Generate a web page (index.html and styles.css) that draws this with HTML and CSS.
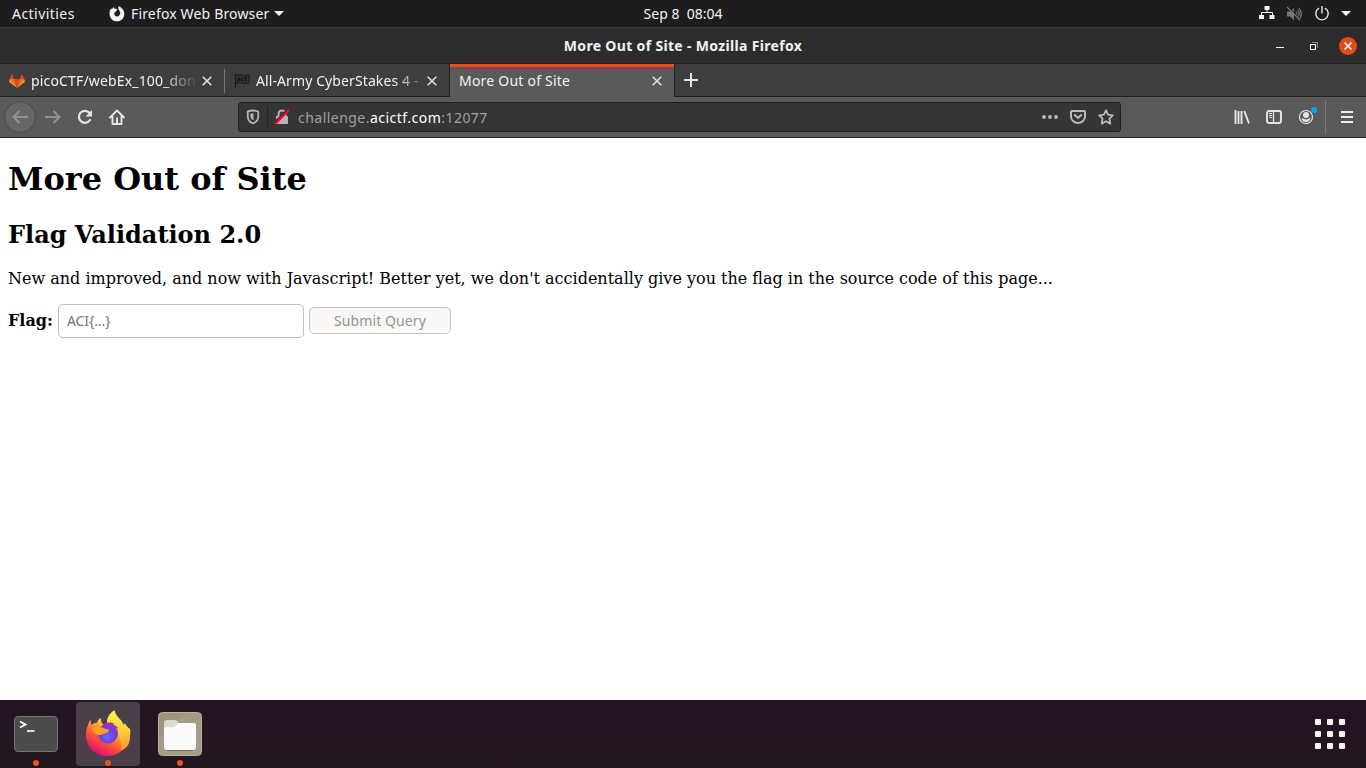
FILE: index.html
```html
<!DOCTYPE html>
<html lang="en">
<head>
<meta charset="utf-8">
<title>More Out of Site</title>
<link rel="stylesheet" href="styles.css">
</head>
<body>
<header class="topbar">
  <div class="top-left">
    <span class="activities">Activities</span>
    <svg class="ffsym" width="16" height="16" viewBox="0 0 16 16"><path d="M5 1.2 5.700 3C6.900 2.500 8 2.800 8.500 3.700L6.700 5.400C6.300 5.900 6.200 6.300 5.500 6.600 4.600 8.800 6.200 10.600 8.200 10.400 11 10.100 12 7.200 10.600 4.900 10 3.800 9 3 9.400.3c1.500.2 2.500 1 3 2.100l.7-.1c3 3.700 2.700 8.100.3 10.700-3 3.200-8.300 3-11-.1C-.2 9.700.1 5.300 2.100 2.300l.8 1.200C3.400 2.200 4 1.600 5 1.200z" fill="#f2f2f2"/></svg>
    <span class="appname">Firefox Web Browser</span>
    <svg class="caret" width="10" height="5" viewBox="0 0 10 5"><path d="M0 0h10L5 5z" fill="#f2f2f2"/></svg>
  </div>
  <div class="clock">Sep 8&nbsp; 08:04</div>
  <div class="top-right">
    <svg width="16" height="14" viewBox="0 0 16 14"><path d="M5.500 0h5v4h-5zM0 9h5v4H0zM10.500 9h5v4h-5z" fill="#f2f2f2"/><path d="M8 4v2.500M2.500 9V6.500h11V9" fill="none" stroke="#f2f2f2"/></svg>
    <svg width="16" height="16" viewBox="0 0 16 16"><path d="M1 5.500h3L8 2v12l-4-3.500H1z" fill="#777"/><path d="M10 5.500q2 2.500 0 5M11.500 3.500q3.500 4.500 0 9M13 1.800q4.500 6 0 12.400" fill="none" stroke="#777" stroke-width="1.200"/><path d="m2 1 12 12" stroke="#1d1d1d" stroke-width="1.500"/><path d="m1 1 13 13" stroke="#777" stroke-width="1.200"/></svg>
    <svg width="16" height="16" viewBox="0 0 16 16"><path d="M5 2.200a6.200 6.200 0 1 0 6 0M8 0v7.500" fill="none" stroke="#eee" stroke-width="1.400"/></svg>
    <svg width="10" height="5" viewBox="0 0 10 5"><path d="M0 0h10L5 5z" fill="#f2f2f2"/></svg>
  </div>
</header>
<div class="titlebar">
  <span class="wintitle">More Out of Site - Mozilla Firefox</span>
  <div class="winbtns">
    <svg width="8" height="1"><path d="M0 0h8v1H0z" fill="#fff"/></svg>
    <svg width="8" height="8" viewBox="0 0 8 8"><path d="M.5 2.500h5v5h-5z" fill="none" stroke="#fff"/><path d="M2 .5h5.500V6" fill="none" stroke="#888"/></svg>
    <svg width="18" height="18" viewBox="0 0 18 18"><circle cx="9" cy="9" r="9" fill="#e24c17"/><path d="m5.500 5.500 7 7m0-7-7 7" stroke="#fff" stroke-width="1.500"/></svg>
  </div>
</div>
<div class="tabs">
  <div class="tab tab1">
    <svg width="16" height="16" viewBox="0 0 16 16"><path d="m8 15 3-9H5z" fill="#e24329"/><path d="M8 15 5 6H.8zM8 15l3-9h4.200z" fill="#fc6d26"/><path d="M.8 6 0 8.700 8 15zM15.200 6l.8 2.700L8 15z" fill="#fca326"/><path d="M.8 6H5L3 .5zM15.200 6H11l2-5.500z" fill="#e24329"/></svg>
    <span class="label">picoCTF/webEx_100_don</span>
    <svg class="x" width="10" height="10" viewBox="0 0 10 10"><path d="m.7.7 8.600 8.600m0-8.600L.7 9.300" stroke="#ddd" stroke-width="1.600"/></svg>
  </div>
  <div class="tab tab2">
    <svg width="16" height="16" viewBox="0 0 16 16"><path d="M1.500 1v14M2 2q3-1 6.500 0T15 2v8q-3 1-6.500 0T2 10.500" fill="#343434" stroke="#191919"/><path d="m3.500 8 1.200-3.500L6 8M4 7h1.500M9.500 5H7.500v2.500h2M10.500 4.700H13M11.700 4.700v3M10.500 7.700H13" fill="none" stroke="#111"/></svg>
    <span class="label">All-Army CyberStakes 4 -</span>
    <svg class="x" width="10" height="10" viewBox="0 0 10 10"><path d="m.7.7 8.600 8.600m0-8.600L.7 9.300" stroke="#ddd" stroke-width="1.600"/></svg>
  </div>
  <div class="tab tab3">
    <span class="label">More Out of Site</span>
    <svg class="x" width="10" height="10" viewBox="0 0 10 10"><path d="m.7.7 8.600 8.600m0-8.600L.7 9.300" stroke="#ddd" stroke-width="1.600"/></svg>
  </div>
  <svg class="plus" width="14" height="14" viewBox="0 0 14 14"><path d="M7 0v14M0 7h14" stroke="#e5e5e5" stroke-width="2"/></svg>
</div>
<nav class="nav">
  <div class="back"><svg width="16" height="14" viewBox="0 0 16 14"><path d="M16 7H1.500M7.500 1l-6 6 6 6" fill="none" stroke="#929292" stroke-width="2"/></svg></div>
  <svg class="fwd" width="16" height="14" viewBox="0 0 16 14"><path d="M0 7h14.500M8.500 1l6 6-6 6" fill="none" stroke="#929292" stroke-width="2"/></svg>
  <svg class="reload" width="16" height="16" viewBox="0 0 16 16"><path d="M12.600 4A6 6 0 1 0 13 11" fill="none" stroke="#e5e5e5" stroke-width="2.200" stroke-linecap="round"/><path d="M15 1v6.500H8.500z" fill="#e5e5e5"/></svg>
  <svg class="home" width="16" height="16" viewBox="0 0 16 16"><path d="m1 8.500 7-7 7 7M3.500 7.500V15h9V7.500" fill="none" stroke="#e5e5e5" stroke-width="1.900" stroke-linecap="round" stroke-linejoin="round"/><path d="M7 8.500h2V14H7z" fill="#e5e5e5"/></svg>
  <div class="urlbar">
    <svg class="shield" width="14" height="16" viewBox="0 0 14 16"><path d="M7 1.500c2.200 0 3.800.4 5.200 1v5.300c0 3.200-2 5.400-5.200 6.600-3.200-1.200-5.200-3.400-5.200-6.600V2.500C3.200 1.900 4.800 1.500 7 1.500z" fill="none" stroke="#b5b5b5" stroke-width="1.800"/><path d="M7.500 4.300v7C5.300 10.300 4.400 9 4.400 7.300V4.800q1.400-.5 3.100-.5z" fill="#b5b5b5"/></svg>
    <span class="usep"></span>
    <svg class="lock" width="16" height="16" viewBox="0 0 16 16"><path d="M4.500 7V5a3.500 3.500 0 0 1 7 0v2" fill="none" stroke="#b5b5b5" stroke-width="2"/><rect x="2" y="7" width="12" height="8" rx="1" fill="#b5b5b5"/><path d="M1 13.500 14 .5" stroke="#353535" stroke-width="2.500"/><path d="M1.300 14.700 14.500 1.500" stroke="#ff0039" stroke-width="2.200" stroke-linecap="round"/></svg>
    <span class="url">challenge.<b>acictf.com</b>:12077</span>
    <svg class="dots" width="16" height="4" viewBox="0 0 16 4"><g fill="#bbb"><circle cx="2" cy="2" r="1.900"/><circle cx="8" cy="2" r="1.900"/><circle cx="14" cy="2" r="1.900"/></g></svg>
    <svg class="pocket" width="16" height="14" viewBox="0 0 16 14"><path d="M2 1h12q1 0 1 1v4.500a7 6.500 0 0 1-14 0V2q0-1 1-1z" fill="none" stroke="#bbb" stroke-width="2"/><path d="m4.800 5 3.200 3 3.200-3" fill="none" stroke="#bbb" stroke-width="2" stroke-linecap="round"/></svg>
    <svg class="star" width="16" height="16" viewBox="0 0 16 16"><path d="m8 1.200 2.100 4.400 4.700.7-3.400 3.400.9 4.900L8 12.300l-4.300 2.300.9-4.900L1.200 6.300l4.700-.7z" fill="none" stroke="#bbb" stroke-width="1.800" stroke-linejoin="round"/></svg>
  </div>
  <div class="tools">
    <svg width="16" height="14" viewBox="0 0 16 14"><path d="M1.500 0v14M4.500 1v13M7.500 1v13M10.300 1l4.700 12.500" stroke="#e5e5e5" stroke-width="1.900" fill="none"/></svg>
    <svg width="16" height="14" viewBox="0 0 16 14"><rect x="1" y="1" width="14" height="12" rx="2" fill="none" stroke="#e5e5e5" stroke-width="1.900"/><path d="M7.500 1v12" stroke="#e5e5e5" stroke-width="1.300"/><path d="M3 3.500h3M3 5.500h3M3.500 7.500H6" stroke="#e5e5e5"/></svg>
    <svg class="acct" width="20" height="20" viewBox="0 0 20 20"><circle cx="8" cy="11" r="6.500" fill="none" stroke="#e5e5e5" stroke-width="1.200"/><circle cx="8" cy="9" r="3" fill="#e5e5e5"/><path d="M3.500 12.500c1.500-.7 2 1 4.500 1s3-1.700 4.500-1C12 15 10 16 8 16s-4-1-4.500-3.500z" fill="#e5e5e5"/><circle cx="16" cy="4" r="3" fill="#00a9f4"/></svg>
    <span class="tsep"></span>
    <svg class="menu" width="12" height="12" viewBox="0 0 12 12"><path d="M0 1h12M0 6h12M0 11h12" stroke="#eee" stroke-width="2"/></svg>
  </div>
</nav>
<main class="page">
  <h1>More Out of Site</h1>
  <h2>Flag Validation 2.0</h2>
  <p>New and improved, and now with Javascript! Better yet, we don't accidentally give you the flag in the source code of this page...</p>
  <form class="form"><label>Flag:</label><input class="flag" type="text" placeholder="ACI{...}"><button class="submit" disabled><span>Submit Query</span></button></form>
</main>
<footer class="dock">
  <div class="app">
    <svg width="64" height="64" viewBox="0 0 64 64"><rect x="10.500" y="14.500" width="43" height="35" rx="3.500" fill="#4b4b4b" stroke="#717171"/><path d="m16 19.500 5.500 3-5.500 3" fill="none" stroke="#fff" stroke-width="1.900"/><path d="M23 29h7.500" stroke="#fff" stroke-width="1.600"/><circle cx="32" cy="61" r="3" fill="#e95420"/></svg>
  </div>
  <div class="app active">
    <svg width="64" height="64" viewBox="0 0 64 64">
      <defs>
        <linearGradient id="body" x1=".85" y1=".15" x2=".3" y2=".95"><stop offset="0" stop-color="#fff04a"/><stop offset=".32" stop-color="#ffb52b"/><stop offset=".62" stop-color="#ff5b35"/><stop offset="1" stop-color="#e8106f"/></linearGradient>
        <radialGradient id="globe" cx=".45" cy=".65" r=".65"><stop offset="0" stop-color="#7763ff"/><stop offset=".6" stop-color="#6a43d5"/><stop offset="1" stop-color="#9730c8"/></radialGradient>
        <linearGradient id="flame" x1=".4" y1="0" x2=".5" y2="1"><stop offset="0" stop-color="#fff44f"/><stop offset=".5" stop-color="#ffd43a"/><stop offset="1" stop-color="#ff9a27"/></linearGradient>
      </defs>
      <path d="M15 17.500c-.5 2-.2 4 .2 5.200 2-1.300 4-2 5.800-2 .5-2 2-4 3.800-5 0 3 .7 5.500 3 7.300h9l12 0 5.200 4c2 14-8 26.500-22 27C18 54.500 9.500 43 9.900 32c0-4 1-7 2-8.500.5-2.500 1.700-4.700 3.100-6z" fill="url(#body)"/>
      <path d="M38.500 8c.5 5 4.500 7.500 7 11 1 1.500 2 3 2.500 4.500l.5-2.500c4.500 5 6.500 11 5 18-1 5-4 8-8 9 0-4-1-13-4-18-4-3-9-3-10.500-9-.5-5 3-10 7.500-13z" fill="url(#flame)"/>
      <circle cx="32" cy="31.500" r="10" fill="url(#globe)"/>
      <path d="M26 23.500c3-3.500 9-4 13-1.500-1 0-1.500.2-2 .7 2.500.5 4.500 2 5.500 4.300-4-2.500-8-3-16.500-3.500z" fill="#a22bd0"/>
      <path d="M15.500 27c4-3 10-2.500 14 0 2 .8 3.500 0 3.500 1.300-.5 2-3 2.700-5 3.400-2.500.8-4 1.500-6 1.300-3-1.500-5-3.500-6.500-6z" fill="#ffa126"/>
      <circle cx="32" cy="61" r="3" fill="#e95420"/>
    </svg>
  </div>
  <div class="app">
    <svg width="64" height="64" viewBox="0 0 64 64"><rect x="10.500" y="10.500" width="43" height="43" rx="4" fill="#9d937f" stroke="#bab29f"/><path d="M11 37 37 11h16v42H11z" fill="#aaa18d" opacity=".6"/><path d="M16 21q0-3 3-3h9l4 4v8H16z" fill="#ded9cf"/><path d="M19 48.500h26" stroke="#71695d"/><path d="M16 27q0-2 2-2h8l5-4h15q2 0 2 2v22q0 3-3 3H19q-3 0-3-3z" fill="#fafafa"/><circle cx="32" cy="61" r="3" fill="#e95420"/></svg>
  </div>
  <svg class="grid" width="30" height="30" viewBox="0 0 30 30"><g fill="#f2f2f0"><rect width="6" height="6" rx="1"/><rect x="12" width="6" height="6" rx="1"/><rect x="24" width="6" height="6" rx="1"/><rect y="12" width="6" height="6" rx="1"/><rect x="12" y="12" width="6" height="6" rx="1"/><rect x="24" y="12" width="6" height="6" rx="1"/><rect y="24" width="6" height="6" rx="1"/><rect x="12" y="24" width="6" height="6" rx="1"/><rect x="24" y="24" width="6" height="6" rx="1"/></g></svg>
</footer>
</body>
</html>
```
FILE: styles.css
```css
* { box-sizing: border-box; }
body { margin: 0; width: 1366px; height: 768px; overflow: hidden; display: flex; flex-direction: column; background: #fff; font: 14px/20px "Noto Sans", "Open Sans", sans-serif; color: #f2f2f2; }
svg { display: block; flex: none; }
span { white-space: nowrap; }

.topbar { height: 28px; flex: none; display: grid; grid-template-columns: 1fr auto 1fr; align-items: center; background: #1d1d1d; border-bottom: 1px solid #3b3b3b; padding: 0 15px 0 12px; }
.top-left { display: flex; align-items: center; }
.activities { width: 97px; letter-spacing: .45px; }
.appname { width: 138px; margin-left: 6px; letter-spacing: .16px; }
.caret { margin-left: 5px; }
.clock { margin-right: -3px; }
.top-right { display: flex; justify-content: flex-end; align-items: center; gap: 12px; }
.top-right svg:last-child { margin-left: -1px; }
.top-right svg:first-child { margin-right: -1px; }
.top-right svg:first-child { margin-top: -1px; }

.titlebar { height: 36px; flex: none; display: grid; grid-template-columns: 1fr auto 1fr; align-items: center; background: #2c2c2c; padding-right: 9px; border-bottom: 1px solid #202020; }
.wintitle { grid-column: 2; font-weight: 700; margin-right: -9px; letter-spacing: .33px; }
.winbtns { display: flex; justify-content: flex-end; align-items: center; gap: 21px; }
.winbtns svg:first-child { margin: 3px 5px 0 0; }

.tabs { height: 33px; flex: none; display: flex; background: #3e3e3e; }
.tab { display: flex; align-items: center; position: relative; border-bottom: 1px solid #202020; padding-top: 1px; }
.label { flex: none; letter-spacing: .16px; }
.tab1 { width: 225px; padding-left: 9px; }
.tab1 .label { width: 164px; margin-left: 6px; mask-image: linear-gradient(90deg, #000 130px, transparent 168px); }
.tab1::after { content: ""; position: absolute; right: 0; top: 5px; width: 1px; height: 24px; background: #777; }
.tab1 .x { margin-left: 7px; }
.tab2 { width: 225px; padding-left: 9px; border-right: 1px solid #202020; }
.tab2 .label { width: 164px; margin-left: 6px; letter-spacing: .1px; mask-image: linear-gradient(90deg, #000 138px, transparent 174px); }
.tab2 .x { margin-left: 7px; }
.tab3 { width: 225px; padding: 1px 12px 0 9px; background: #5a5a5a; border-bottom: 0; border-right: 1px solid #202020; justify-content: space-between; box-shadow: inset 0 3px #e2501b; }
.tab3 .label { letter-spacing: .22px; margin-top: -1px; }
.tab3 .x { margin-top: -1px; }
.plus { margin: 9px 0 0 9px; }
.tabs::after { content: ""; flex: 1; border-bottom: 1px solid #202020; margin-left: -23px; }

.nav { height: 41px; flex: none; display: flex; align-items: center; background: #5a5a5a; border-bottom: 1px solid #242424; padding-left: 4px; }
.back { width: 32px; height: 32px; border-radius: 50%; background: #676767; border: 1px solid #484848; display: grid; place-items: center; }
.fwd { margin-left: 9px; }
.reload, .home { margin-left: 16px; }
.urlbar { width: 883px; height: 30px; margin-left: 113px; display: flex; align-items: center; background: #353535; border: 1px solid #202020; border-radius: 3px; padding: 0 6px 0 7px; }
.usep { width: 1px; height: 22px; background: #242424; margin: 0 6px 0 7px; }
.url { margin: 1px 0 0 8px; color: #a0a0a0; letter-spacing: .47px; }
.url b { font-weight: 400; color: #fff; }
.dots { margin-left: auto; }
.pocket, .star { margin-left: 12px; }
.tools { display: flex; align-items: center; margin-left: 113px; }
.tools > svg + svg { margin-left: 16px; }
.tools .acct { margin-left: 16px; margin-top: -3px; }
.tsep { width: 1px; height: 34px; background: #7b7b7b; margin: 0 15px 0 7px; }

.page { flex: 1; padding: 0 8px; color: #000; background: #fff; font: 16px/19px "DejaVu Serif", serif; }
h1 { margin: 22px 0 0; font-size: 32px; line-height: 38px; }
h2 { margin: 23px 0 0; font-size: 24px; line-height: 28px; }
.page p { margin: 20px 0 16px; white-space: nowrap; }
.form { display: flex; align-items: center; font-weight: 700; }
.form label { width: 50px; margin-top: -2px; }
.flag { width: 246px; height: 34px; border: 1px solid #c4beb8; border-radius: 5px; padding: 0 8px 2px; font: 14px "Noto Sans", sans-serif; letter-spacing: -.1px; background: #fff; }
.flag::placeholder { color: #757575; }
.submit { width: 142px; height: 27px; margin: -2px 0 0 5px; padding: 0; border: 1px solid #c8c2bd; border-radius: 5px; background: #faf8f7; color: #929595; font: 14px/25px "Noto Sans", sans-serif; letter-spacing: .1px; }

.dock { height: 68px; flex: none; display: flex; align-items: center; background: linear-gradient(#24142a, #221620); background: linear-gradient(#241424, #22161f); padding: 0 21px 0 4px; gap: 8px; }
.app { width: 64px; height: 64px; border-radius: 4px; }
.active { background: #4b3f4a; }
.grid { margin-left: auto; }
```
